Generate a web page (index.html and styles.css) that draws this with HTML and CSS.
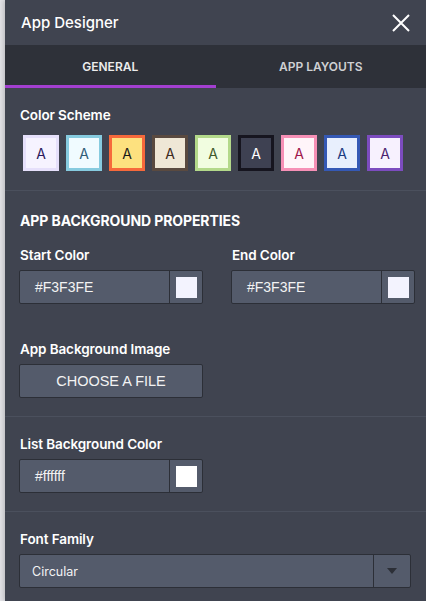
FILE: index.html
```html
<!DOCTYPE html>
<html lang="en">
<head>
    <meta charset="UTF-8">
    <meta name="viewport" content="width=device-width, initial-scale=1.0">
    <title>App Designer</title>
    <link rel="stylesheet" href="styles.css">
</head>
<body>
    <div class="panel">
        <header class="panel-header">
            <h1>App Designer</h1>
            <button class="close-btn" aria-label="Close">
                <svg width="20" height="20" viewBox="0 0 20 20">
                    <path d="M2 2 L18 18 M18 2 L2 18" stroke="#fff" stroke-width="2" fill="none"/>
                </svg>
            </button>
        </header>

        <nav class="tabs">
            <div class="tab active">GENERAL</div>
            <div class="tab">APP LAYOUTS</div>
        </nav>

        <section class="section">
            <div class="label">Color Scheme</div>
            <div class="schemes">
                <div class="scheme s1">A</div>
                <div class="scheme s2">A</div>
                <div class="scheme s3">A</div>
                <div class="scheme s4">A</div>
                <div class="scheme s5">A</div>
                <div class="scheme s6">A</div>
                <div class="scheme s7">A</div>
                <div class="scheme s8">A</div>
                <div class="scheme s9">A</div>
            </div>
        </section>

        <section class="section">
            <div class="section-title">APP BACKGROUND PROPERTIES</div>
            <div class="row">
                <div class="field">
                    <div class="label">Start Color</div>
                    <div class="color-input">
                        <span class="value">#F3F3FE</span>
                        <span class="picker"><span class="chip" style="background:#F3F3FE"></span></span>
                    </div>
                </div>
                <div class="field">
                    <div class="label">End Color</div>
                    <div class="color-input">
                        <span class="value">#F3F3FE</span>
                        <span class="picker"><span class="chip" style="background:#F3F3FE"></span></span>
                    </div>
                </div>
            </div>
            <div class="field spaced">
                <div class="label">App Background Image</div>
                <button class="file-btn">CHOOSE A FILE</button>
            </div>
        </section>

        <section class="section">
            <div class="field">
                <div class="label">List Background Color</div>
                <div class="color-input">
                    <span class="value">#ffffff</span>
                    <span class="picker"><span class="chip" style="background:#ffffff"></span></span>
                </div>
            </div>
        </section>

        <section class="section last">
            <div class="field">
                <div class="label">Font Family</div>
                <div class="select">
                    <span class="value">Circular</span>
                    <span class="arrow"></span>
                </div>
            </div>
        </section>
    </div>
</body>
</html>
```

FILE: styles.css
```css
:root {
    --panel-bg: #404450;
    --tabs-bg: #2e3139;
    --input-bg: #545b6b;
    --input-border: #2c2f37;
    --divider: #4b505d;
    --accent: #a33fd0;
}

* {
    margin: 0;
    padding: 0;
    box-sizing: border-box;
}

body {
    background: #e2e2e6;
    font-family: 'Inter', 'Open Sans', sans-serif;
    color: #fff;
    height: 601px;
    overflow: hidden;
}

.panel {
    margin-left: 5px;
    height: 601px;
    background: var(--panel-bg);
    box-shadow: -2px 0 4px rgba(0, 0, 0, 0.15);
}

.panel-header {
    height: 45px;
    display: flex;
    align-items: center;
    justify-content: space-between;
    padding: 0 15px 0 16px;
}

.panel-header h1 {
    font-size: 15px;
    font-weight: 500;
}

.close-btn {
    background: none;
    border: none;
    width: 20px;
    height: 20px;
    display: flex;
    cursor: pointer;
}

.tabs {
    display: flex;
    height: 43px;
    background: var(--tabs-bg);
}

.tab {
    flex: 1;
    display: flex;
    align-items: center;
    justify-content: center;
    font-size: 12px;
    font-weight: 600;
    color: #cfd0d3;
    border-bottom: 3px solid transparent;
    padding-top: 2px;
}

.tab.active {
    color: #ececec;
    border-bottom-color: var(--accent);
}

.section {
    padding: 19px 15px 18px;
    border-bottom: 1px solid var(--divider);
}

.section:first-of-type {
    padding-bottom: 19px;
}

.section.last {
    border-bottom: none;
}

.label {
    font-size: 13.5px;
    font-weight: 600;
    margin-bottom: 7px;
    letter-spacing: -0.1px;
}

.section-title {
    font-size: 14px;
    font-weight: 700;
    letter-spacing: -0.1px;
    margin: 2px 0 18px;
}

.schemes {
    display: flex;
    gap: 7px;
    padding: 5px 0 0 3px;
}

.scheme {
    width: 36px;
    height: 36px;
    border: 3px solid;
    display: flex;
    align-items: center;
    justify-content: center;
    font-size: 14px;
    padding-top: 1px;
}

.s1 { border-color: #e6e0fb; background: #f6f3ff; color: #2b1a5e; }
.s2 { border-color: #86cbdf; background: #f0fbff; color: #2f5d77; }
.s3 { border-color: #f6693b; background: #fde17f; color: #1a1a1a; }
.s4 { border-color: #5a4a40; background: #efe7d6; color: #3b2a21; }
.s5 { border-color: #b3d98a; background: #f1fde0; color: #3f5a2c; }
.s6 { border-color: #16151f; background: #3e4152; color: #ffffff; }
.s7 { border-color: #f690b6; background: #fff5f9; color: #a0154b; }
.s8 { border-color: #3559b5; background: #e8effd; color: #1b3a80; }
.s9 { border-color: #7c4cbf; background: #f7f1fe; color: #4a1f70; }

.row {
    display: flex;
    gap: 29px;
}

.row .field {
    width: 184px;
}

.field {
    display: flex;
    flex-direction: column;
}

.field.spaced {
    margin-top: 37px;
    width: 184px;
}

.color-input {
    display: flex;
    width: 184px;
    height: 34px;
    margin-left: -1px;
    background: var(--input-bg);
    border: 1px solid var(--input-border);
    border-radius: 2px;
}

.color-input .value {
    flex: 1;
    display: flex;
    align-items: center;
    padding-left: 15px;
    font-family: 'Liberation Sans', Arial, sans-serif;
    font-size: 14px;
    color: #f3f3f3;
    border-right: 1px solid var(--input-border);
}

.picker {
    width: 32px;
    display: flex;
    align-items: center;
    justify-content: center;
}

.chip {
    width: 21px;
    height: 21px;
}

.file-btn {
    width: 184px;
    height: 34px;
    margin-left: -1px;
    background: var(--input-bg);
    border: 1px solid var(--input-border);
    border-radius: 2px;
    color: #f3f3f3;
    font-family: 'Liberation Sans', Arial, sans-serif;
    font-size: 14.5px;
    cursor: pointer;
}

.select {
    display: flex;
    height: 34px;
    margin-left: -1px;
    background: var(--input-bg);
    border: 1px solid var(--input-border);
    border-radius: 2px;
}

.select .value {
    flex: 1;
    display: flex;
    align-items: center;
    padding-left: 12px;
    font-size: 12.5px;
    color: #f3f3f3;
    border-right: 1px solid var(--input-border);
}

.select .arrow {
    width: 36px;
    display: flex;
    align-items: center;
    justify-content: center;
}

.select .arrow::after {
    content: '';
    border-left: 5px solid transparent;
    border-right: 5px solid transparent;
    border-top: 6px solid #2c2f37;
}
```
